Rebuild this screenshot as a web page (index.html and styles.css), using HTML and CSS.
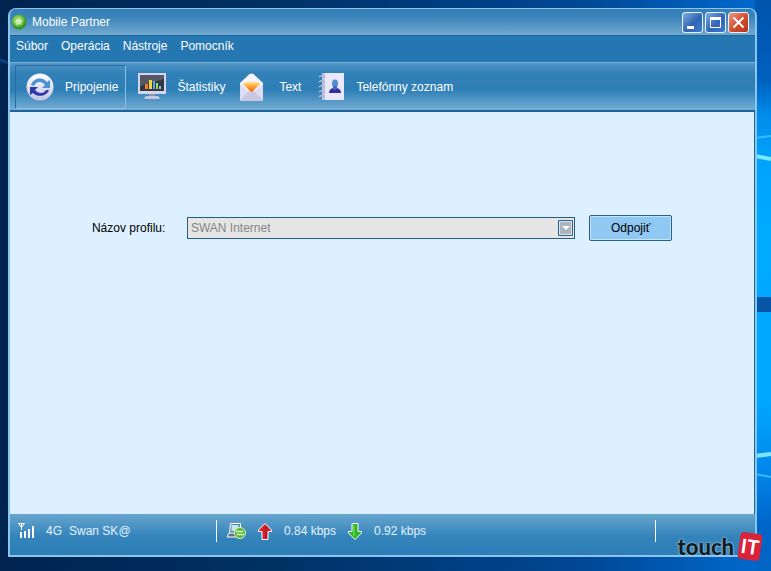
FILE: index.html
```html
<!DOCTYPE html>
<html lang="sk">
<head>
<meta charset="utf-8">
<meta name="viewport" content="width=device-width, initial-scale=1">
<title>Mobile Partner</title>
<link rel="stylesheet" href="styles.css">
</head>
<body>
<svg class="wallpaper" viewBox="0 0 771 571" preserveAspectRatio="none" aria-hidden="true">
  <defs>
    <linearGradient id="sky"><stop offset="0" stop-color="#00234f"/><stop offset=".35" stop-color="#003164"/><stop offset=".75" stop-color="#004794"/><stop offset="1" stop-color="#006bd0"/></linearGradient>
    <linearGradient id="beam" x2="0" y2="1"><stop offset="0" stop-color="#0054ac"/><stop offset=".14" stop-color="#0060bf"/><stop offset=".2" stop-color="#008bea"/><stop offset=".28" stop-color="#00a3fb"/><stop offset=".4" stop-color="#00aaff"/><stop offset=".7" stop-color="#00a8ff"/><stop offset=".82" stop-color="#0088eb"/><stop offset=".92" stop-color="#0065c9"/><stop offset="1" stop-color="#0065c4"/></linearGradient>
  </defs>
  <rect width="771" height="571" fill="url(#sky)"/>
  <path d="M0 58q5 2 10 4v3l-10-3z" fill="#064179"/>
  <rect x="755" width="16" height="571" fill="url(#beam)"/>
  <path d="M755 297h16v15h-16z" fill="#0755a8"/>
  <path d="M755 156l16 3M755 456l16-2" stroke="#7ce6ff" stroke-width="4"/>
  <path d="M755 138l16-2M755 474l16 3" stroke="#32bbff" stroke-width="2"/>
</svg>

<main class="window">
  <header class="titlebar">
    <svg class="app-icon" viewBox="0 0 16 16" aria-hidden="true">
      <defs><radialGradient id="ball" cx=".45" cy=".4"><stop offset="0" stop-color="#c8ee9c"/><stop offset=".6" stop-color="#7cc44e"/><stop offset="1" stop-color="#2e9422"/></radialGradient></defs>
      <circle cx="8" cy="8" r="7.5" fill="url(#ball)"/>
      <path d="M5 5l2 1 2-2 1 2 2 1-2 2 1 2-3-1-2 2-1-3-2-1 2-1z" fill="#e4f6ce" opacity=".6"/>
    </svg>
    <h1>Mobile Partner</h1>
    <div class="window-buttons">
      <button type="button" aria-label="Minimalizovať"><svg viewBox="0 0 19 19"><path d="M4 13h7v3H4z" fill="#fff"/></svg></button>
      <button type="button" aria-label="Maximalizovať"><svg viewBox="0 0 19 19"><path d="M4.500 5v9.500h10V5" fill="none" stroke="#fff"/><path d="M4 4h11v3H4z" fill="#fff"/></svg></button>
      <button type="button" class="close" aria-label="Zavrieť"><svg viewBox="0 0 19 19"><path d="M4.500 4.500l10 10M14.500 4.500l-10 10" fill="none" stroke="#fff" stroke-width="2"/></svg></button>
    </div>
  </header>

  <nav class="menubar">
    <a href="#">Súbor</a><a href="#">Operácia</a><a href="#">Nástroje</a><a href="#">Pomocník</a>
  </nav>

  <div class="toolbar">
    <button type="button" class="tool active">
      <svg viewBox="0 0 28 28" aria-hidden="true">
        <defs><linearGradient id="disc" x2="0" y2="1"><stop offset="0" stop-color="#fff"/><stop offset="1" stop-color="#c4c3e4"/></linearGradient></defs>
        <circle cx="14" cy="14" r="13.500" fill="url(#disc)"/>
        <path d="M5 12c2-7 11-9 16-3l3-2v8h-8l3-3c-3-4-9-4-11 1z" fill="#4e91d3"/>
        <path d="M23 17c-2 6-11 8-16 3l-3 2v-8h8l-3 3c3 4 9 4 11 0z" fill="#2e3aab"/>
      </svg>
      <span>Pripojenie</span>
    </button>
    <button type="button" class="tool">
      <svg viewBox="0 0 28 28" aria-hidden="true">
        <path d="M0 0h28v21H0z" fill="#d5d6ec"/><path d="M2 2h24v16H2z" fill="#343744"/><path d="M2 2h24v4L2 13z" fill="#555967"/>
        <path d="M7 11h3v5H7z" fill="#f17d29"/><path d="M11 7h3v9h-3z" fill="#f4d33e"/><path d="M15 8h2v8h-2z" fill="#55a7ea"/><path d="M18 10h2v6h-2z" fill="#9bd85e"/><path d="M21 13h2v3h-2z" fill="#79c8da"/>
        <path d="M11 21h6v2h-6z" fill="#9290b4"/><path d="M8 23h12l2 2-1 1H7l-1-1z" fill="#c8c5df"/>
      </svg>
      <span>Štatistiky</span>
    </button>
    <button type="button" class="tool letter">
      <svg viewBox="0 0 28 28" aria-hidden="true">
        <defs><linearGradient id="seal" x2="0" y2="1"><stop offset="0" stop-color="#ffe8a5"/><stop offset=".45" stop-color="#fca733"/><stop offset="1" stop-color="#ee590f"/></linearGradient></defs>
        <path d="M3 10L12 1.500q2.500-2 5 0L26 10v16q0 2-2 2H5q-2 0-2-2z" fill="#f4f2fc"/>
        <path d="M3 11l11 10 12-10v15q0 2-2 2H5q-2 0-2-2z" fill="#dedcf0"/>
        <path d="M3 27l9-9 2 2 3-2 9 9-2 1H5z" fill="#cac7e2"/>
        <path d="M6 10q8-3 17 0v1l-8.500 8.500L6 11z" fill="url(#seal)"/>
      </svg>
      <span>Text</span>
    </button>
    <button type="button" class="tool">
      <svg viewBox="0 0 28 28" aria-hidden="true">
        <path d="M5 0h22v27H5z" fill="#e9e8fa"/><path d="M5 0h3v27H5z" fill="#c2c2e2"/>
        <path d="M2 4q4-3 6 1M2 9q4-3 6 1M2 14q4-3 6 1M2 19q4-3 6 1M2 24q4-3 6 1" fill="none" stroke="#b5b7cf" stroke-width="1.500"/>
        <ellipse cx="18" cy="10.500" rx="3" ry="4" fill="#548bd1"/><path d="M12 20q0-4 4-5h4q4 1 4 5z" fill="#342da3"/><path d="M16 13h4v3l-2 1-2-1z" fill="#4068bd"/>
      </svg>
      <span>Telefónny zoznam</span>
    </button>
  </div>

  <section class="content">
    <form class="profile">
      <label for="profile">Názov profilu:</label>
      <div class="combo">
        <select id="profile" disabled><option>SWAN Internet</option></select>
        <svg class="combo-arrow" viewBox="0 0 15 16" aria-hidden="true"><path d="M.5.5h14v15H.5z" fill="#abb5be" stroke="#2e6288"/><path d="M1.500 1.500h12v13h-12z" fill="none" stroke="#dbe4e9"/><path d="M4 6h8l-4 4z" fill="#fff"/></svg>
      </div>
      <button type="button" class="disconnect">Odpojiť</button>
    </form>
  </section>

  <footer class="statusbar">
    <div class="network">
      <svg class="signal" viewBox="0 0 17 16" aria-hidden="true"><path d="M.5.5h6l-3 4zM3.500 0v7" fill="none" stroke="#fff"/><path d="M2 9h2v6H2zM6 8h2v7H6zM10 6h2v9h-2zM14 3h2v12h-2z" fill="#fff"/></svg>
      <span>4G</span><span>Swan SK@</span>
    </div>
    <div class="traffic">
      <svg class="link" viewBox="0 0 20 16" aria-hidden="true"><path d="M4.500.5h10v10h-11z" fill="#5287aa" stroke="#fff"/><path d="M5.500 2h7v6h-7z" fill="#c8e2ef"/><path d="M3 10h12l1 4H1z" fill="#637681" stroke="#fff"/><circle cx="14" cy="10" r="5.500" fill="#55b932" stroke="#d9f5c2"/><path d="M10 8.500h7M11 11.500h7" stroke="#e6ffd9" stroke-width="1.500"/></svg>
      <svg class="arrow" viewBox="0 0 14 17" aria-hidden="true"><path d="M7 .5l6.500 6.500v1.500H10v8H4v-8H.5V7z" fill="#d91f2c" stroke="#fff"/><path d="M8 3v12" stroke="#851720"/></svg>
      <span>0.84 kbps</span>
      <svg class="arrow" viewBox="0 0 14 17" aria-hidden="true"><path d="M7 16.500l6.500-6.500V8.500H10v-8H4v8H.5V10z" fill="#2bb51f" stroke="#fff"/><path d="M6 2v11" stroke="#92e66f"/></svg>
      <span>0.92 kbps</span>
    </div>
    <div class="status-end"></div>
  </footer>
</main>

<div class="watermark"><span class="touch">touch</span><span class="it">IT</span></div>
</body>
</html>
```

FILE: styles.css
```css
* { box-sizing: border-box; }

body {
  margin: 0;
  min-height: 100vh;
  padding: 8px 14px 14px 8px;
  display: flex;
  position: relative;
  background: #003164;
  font: 12px/16px "Liberation Sans", Arial, sans-serif;
}

button, select { font: inherit; }
button { padding: 0; }
svg { display: block; flex: none; }

.wallpaper {
  position: absolute;
  inset: 0;
  width: 100%;
  height: 100%;
}

.window {
  position: relative;
  flex: 1;
  min-width: 0;
  display: flex;
  flex-direction: column;
  border: 2px solid #8bc5ec;
  border-top-width: 1px;
  border-radius: 8px 8px 0 0;
  background: #2f80b8;
  overflow: hidden;
}

.titlebar {
  height: 27px;
  padding: 0 6px 0 1px;
  display: flex;
  align-items: center;
  gap: 5px;
  border-bottom: 1px solid #1c659b;
  background: linear-gradient(#3480b7, #3a84ba 30%, #73a9cf);
  color: #fff;
}

.titlebar h1 {
  flex: 1;
  margin: 0;
  font-size: 12px;
  font-weight: 400;
}

.app-icon { width: 16px; height: 16px; }

.window-buttons { display: flex; gap: 2px; }

.window-buttons button {
  width: 21px;
  height: 21px;
  border: 1px solid #e3f4ff;
  border-radius: 3px;
  background: linear-gradient(135deg, #7eaee1, #3164b5 55%, #3e7bd0);
}

.window-buttons .close { background: linear-gradient(135deg, #ed967d, #d34a2b 55%, #b9331c); }
.window-buttons svg { width: 19px; height: 19px; }

.menubar {
  height: 26px;
  padding: 2px 6px;
  display: flex;
  gap: 13px;
  background: #2577b2;
}

.menubar a { color: #fff; text-decoration: none; }

.toolbar {
  height: 50px;
  padding: 2px 5px;
  display: flex;
  align-items: flex-start;
  gap: 12px;
  border-top: 1px solid #78b0d8;
  border-bottom: 2px solid #1c649a;
  background: linear-gradient(#5295c6, #3180b8 22%, #2f7fb7 58%, #76aed5);
}

.tool {
  height: 44px;
  padding: 0;
  display: flex;
  align-items: center;
  gap: 11px;
  border: 0;
  background: none;
  color: #fff;
}

.tool svg { width: 28px; height: 28px; }

.tool.active {
  padding: 0 7px 0 10px;
  border: 1px solid #256c9f;
  border-right-color: #8cbfe2;
  border-bottom-color: #8cbfe2;
  border-radius: 2px;
}

.tool.letter { gap: 14px; margin-right: 4px; }

.content {
  flex: 1;
  padding: 103px 11% 0;
  border-right: 1px solid #1c649a;
  background: #dcf0ff;
}

.profile { display: flex; align-items: center; }
.profile label { width: 95px; flex: none; }

.combo {
  position: relative;
  flex: 1;
  min-width: 0;
  margin-right: 14px;
}

.combo select {
  display: block;
  width: 100%;
  height: 22px;
  padding: 0 20px 0 3px;
  appearance: none;
  border: 1px solid #265b84;
  border-radius: 0;
  background: #e5e5e5;
  color: #858585;
  opacity: 1;
}

.combo-arrow {
  position: absolute;
  top: 3px;
  right: 2px;
  width: 15px;
  height: 16px;
}

.disconnect {
  width: 83px;
  height: 26px;
  border: 1px solid #265f89;
  border-radius: 2px;
  background: #8fc8f3;
  box-shadow: inset 0 0 0 1px #c6e5fb;
  color: #000;
}

.statusbar {
  height: 41px;
  padding-top: 6px;
  display: flex;
  align-items: flex-start;
  background: linear-gradient(#67a5ce, #3484bb 55%, #2d7eb7);
  color: #e3f3ff;
}

.network, .traffic {
  height: 22px;
  display: flex;
  align-items: center;
  border-right: 1px solid #fff;
}

.network { width: 207px; padding-left: 8px; gap: 7px; }
.network .signal { width: 17px; height: 16px; margin-right: 4px; }
.traffic { flex: 1; padding-left: 9px; gap: 12px; }
.link { width: 20px; height: 16px; }
.arrow { width: 14px; height: 17px; }
.status-end { width: 99px; }

.watermark {
  position: absolute;
  right: 10px;
  bottom: 11px;
  display: flex;
  align-items: center;
  gap: 5px;
  font: 900 22px/27px Lato, "Open Sans", sans-serif;
}

.touch {
  color: #111c22;
  text-shadow: 0 0 2px #a7cee9, 0 0 2px #a7cee9;
}

.it {
  padding: 0 2px;
  border-radius: 4px;
  background: #d9233a;
  color: #fff;
  font-size: 20px;
  font-weight: 700;
  transform: rotate(8deg);
}
```
